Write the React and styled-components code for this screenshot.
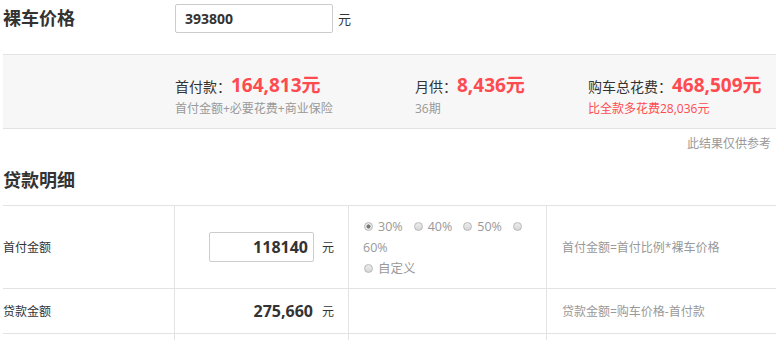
import styled, { createGlobalStyle } from "styled-components";

const GlobalStyle = createGlobalStyle`
  html, body {
    margin: 0;
    padding: 0;
    background: #fff;
  }
  body {
    font-family: "Open Sans", "Noto Sans CJK SC", sans-serif;
    color: #333;
  }
`;

const Page = styled.div`
  width: 776px;
  padding-left: 3px;
  box-sizing: border-box;
`;

const PriceRow = styled.div`
  display: flex;
  align-items: center;
  height: 36px;
`;

const Heading = styled.h2`
  margin: 0;
  width: 172px;
  font-size: 18px;
  font-weight: bold;
  color: #333;
  line-height: 34px;
`;

const PriceInput = styled.input`
  width: 158px;
  height: 29px;
  box-sizing: border-box;
  border: 1px solid #ccc;
  border-radius: 2px;
  padding: 0 9px;
  font-family: inherit;
  font-size: 14px;
  font-weight: bold;
  color: #333;
  outline: none;
`;

const Unit = styled.span`
  margin-left: ${(p) => p.gap || 5}px;
  font-size: ${(p) => p.size || 13}px;
  color: #333;
`;

const Summary = styled.div`
  margin-top: 18px;
  height: 75px;
  border-top: 1px solid #e3e3e3;
  border-bottom: 1px solid #e3e3e3;
  background: #f7f7f7;
  display: grid;
  grid-template-columns: 240px 173px 1fr;
  padding-left: 172px;
  padding-top: 15px;
  box-sizing: border-box;
`;

const Stat = styled.div`
  display: flex;
  flex-direction: column;
`;

const StatLine = styled.div`
  display: flex;
  align-items: baseline;
  height: 26px;
`;

const StatLabel = styled.span`
  font-size: 14px;
  color: #333;
`;

const StatValue = styled.span`
  font-size: 19px;
  font-weight: bold;
  color: #ff4a4f;
`;

const StatNote = styled.div`
  margin-top: 3px;
  font-size: 12px;
  color: ${(p) => (p.red ? "#ff4a4f" : "#999")};
`;

const Disclaimer = styled.div`
  text-align: right;
  font-size: 12px;
  color: #999;
  padding-right: 5px;
  margin-top: 6px;
  line-height: 18px;
`;

const SectionTitle = styled.h3`
  margin: 14px 0 0;
  font-size: 18px;
  font-weight: bold;
  color: #333;
  line-height: 26px;
  height: 38px;
`;

const Table = styled.div`
  display: grid;
  grid-template-columns: 171px 174px 198px 1fr;
  border-top: 1px solid #e3e3e3;
`;

const Cell = styled.div`
  height: ${(p) => p.h}px;
  border-bottom: 1px solid #e3e3e3;
  border-left: ${(p) => (p.first ? "none" : "1px solid #e3e3e3")};
  display: flex;
  align-items: center;
  justify-content: ${(p) => (p.right ? "flex-end" : "flex-start")};
  padding: ${(p) => p.pad || "0"};
  box-sizing: border-box;
  font-size: 12px;
  color: ${(p) => (p.muted ? "#999" : "#333")};
`;

const AmountInput = styled.input`
  width: 105px;
  height: 30px;
  box-sizing: border-box;
  border: 1px solid #ccc;
  border-radius: 2px;
  padding: 0 5px;
  text-align: right;
  font-family: inherit;
  font-size: 16px;
  font-weight: bold;
  color: #333;
  outline: none;
`;

const Amount = styled.span`
  font-size: 16px;
  font-weight: bold;
  color: #333;
  padding-right: 1px;
`;

const RadioGroup = styled.div`
  display: flex;
  flex-wrap: wrap;
  width: 170px;
  column-gap: 10px;
  line-height: 21px;
  font-size: 12.5px;
  color: #999;
`;

const RadioItem = styled.label`
  display: inline-flex;
  align-items: center;
  white-space: nowrap;
  flex-basis: ${(p) => (p.full ? "100%" : "auto")};
`;

const Dot = styled.span`
  display: inline-block;
  width: 7px;
  height: 7px;
  border-radius: 50%;
  border: 1px solid #b8b8b8;
  background: ${(p) =>
    p.checked
      ? "radial-gradient(circle, #777 0 1.8px, #e8e8e8 2.3px)"
      : "linear-gradient(#ededed, #d6d6d6)"};
  margin-right: 5px;
  margin-left: 1px;
`;

function Radio({ checked, children, full }) {
  return (
    <RadioItem full={full}>
      <Dot checked={checked} />
      {children}
    </RadioItem>
  );
}

export default function App() {
  return (
    <Page>
      <GlobalStyle />
      <PriceRow>
        <Heading>裸车价格</Heading>
        <PriceInput defaultValue="393800" />
        <Unit gap={5} size={13}>元</Unit>
      </PriceRow>

      <Summary>
        <Stat>
          <StatLine>
            <StatLabel>首付款：</StatLabel>
            <StatValue>164,813元</StatValue>
          </StatLine>
          <StatNote>首付金额+必要花费+商业保险</StatNote>
        </Stat>
        <Stat>
          <StatLine>
            <StatLabel>月供：</StatLabel>
            <StatValue>8,436元</StatValue>
          </StatLine>
          <StatNote>36期</StatNote>
        </Stat>
        <Stat>
          <StatLine>
            <StatLabel>购车总花费：</StatLabel>
            <StatValue>468,509元</StatValue>
          </StatLine>
          <StatNote red>比全款多花费28,036元</StatNote>
        </Stat>
      </Summary>

      <Disclaimer>此结果仅供参考</Disclaimer>

      <SectionTitle>贷款明细</SectionTitle>

      <Table>
        <Cell first h={83}>首付金额</Cell>
        <Cell h={83} right pad="0 14px 0 0">
          <AmountInput defaultValue="118140" />
          <Unit gap={8} size={12}>元</Unit>
        </Cell>
        <Cell h={83} pad="0 0 0 14px">
          <RadioGroup>
            <Radio checked>30%</Radio>
            <Radio>40%</Radio>
            <Radio>50%</Radio>
            <Radio />
            <RadioItem full>60%</RadioItem>
            <Radio full>自定义</Radio>
          </RadioGroup>
        </Cell>
        <Cell h={83} muted pad="0 0 0 15px">首付金额=首付比例*裸车价格</Cell>

        <Cell first h={45}>贷款金额</Cell>
        <Cell h={45} right pad="0 14px 0 0">
          <Amount>275,660</Amount>
          <Unit gap={8} size={12}>元</Unit>
        </Cell>
        <Cell h={45} />
        <Cell h={45} muted pad="0 0 0 15px">贷款金额=购车价格-首付款</Cell>

        <Cell first h={30} />
        <Cell h={30} />
        <Cell h={30} />
        <Cell h={30} />
      </Table>
    </Page>
  );
}
